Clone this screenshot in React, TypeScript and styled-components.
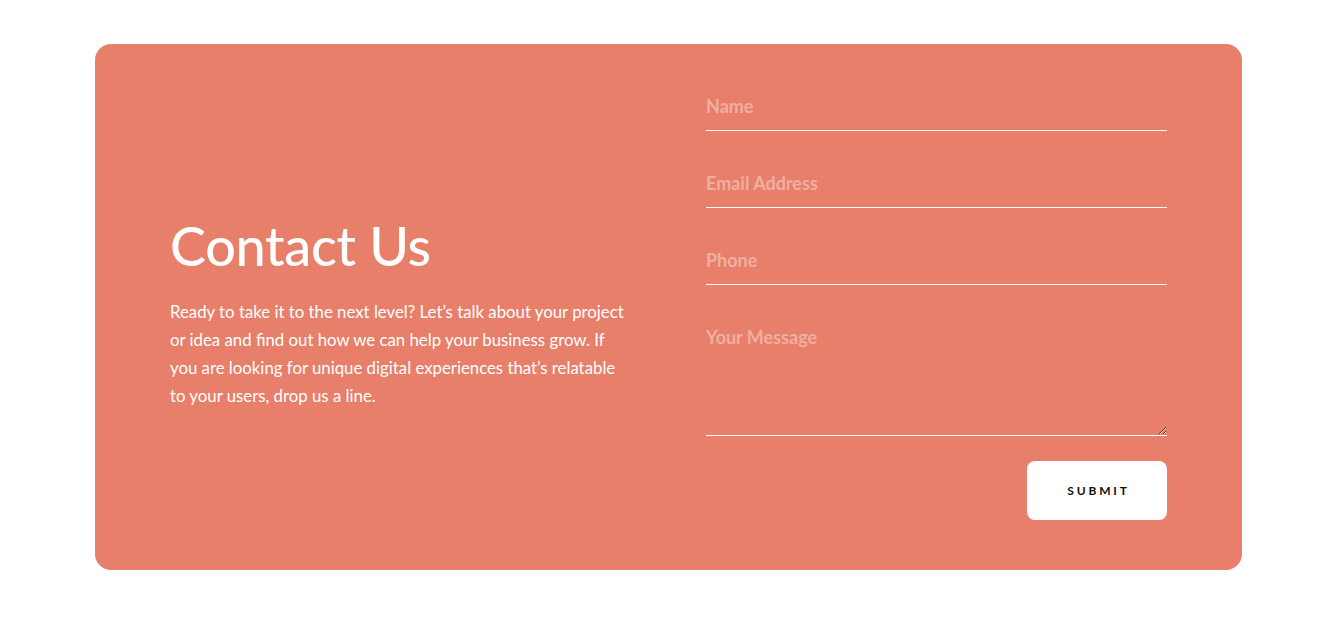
import React from "react";
import styled, { createGlobalStyle } from "styled-components";

const Global = createGlobalStyle`
  html, body { margin: 0; padding: 0; background: #ffffff; }
  body { font-family: Lato, "Open Sans", sans-serif; }
  * { box-sizing: border-box; }
`;

const Page = styled.div`
  padding: 44px 0 0 95px;
`;

const Card = styled.section`
  width: 1147px;
  height: 526px;
  background: #e87f6a;
  border-radius: 16px;
  padding: 40px 75px 50px;
  display: grid;
  grid-template-columns: 461px 461px;
  column-gap: 75px;
`;

const Intro = styled.div`
  display: flex;
  flex-direction: column;
  justify-content: center;
  padding-top: 22px;
`;

const Heading = styled.h2`
  margin: 0 0 22px;
  font-family: Lato, sans-serif;
  font-weight: 500;
  font-size: 54px;
  line-height: 1.1;
  color: #ffffff;
  letter-spacing: -0.3px;
`;

const Text = styled.p`
  margin: 0;
  font-family: Lato, sans-serif;
  font-size: 16.8px;
  line-height: 28px;
  color: #ffffff;
`;

const Form = styled.form`
  display: flex;
  flex-direction: column;
`;

const fieldText = `
  font-family: Lato, sans-serif;
  font-weight: 700;
  font-size: 18px;
  color: #ffffff;
  outline: none;
  background: transparent;
  border: none;
  border-bottom: 1px solid #ffffff;
  &::placeholder { color: rgba(255, 255, 255, 0.38); }
`;

const Input = styled.input`
  ${fieldText}
  height: 47px;
  margin-bottom: 30px;
  padding: 0 0 2px;
`;

const Area = styled.textarea`
  ${fieldText}
  height: 121px;
  padding: 11px 0 0;
`;

const Actions = styled.div`
  display: flex;
  justify-content: flex-end;
  margin-top: 25px;
`;

const Button = styled.button`
  width: 140px;
  height: 59px;
  border: none;
  border-radius: 8px;
  background: #ffffff;
  color: #111111;
  font-family: Lato, sans-serif;
  font-weight: 700;
  font-size: 12px;
  letter-spacing: 2.8px;
  padding: 0 0 0 3px;
  cursor: pointer;
`;

export default function App() {
  return (
    <>
      <Global />
      <Page>
        <Card>
          <Intro>
            <Heading>Contact Us</Heading>
            <Text>
              Ready to take it to the next level? Let’s talk about your project or idea and find out how we can help your business grow. If you are looking for unique digital experiences that’s relatable to your users, drop us a line.
            </Text>
          </Intro>
          <Form onSubmit={(e) => e.preventDefault()}>
            <Input placeholder="Name" />
            <Input placeholder="Email Address" />
            <Input placeholder="Phone" />
            <Area placeholder="Your Message" />
            <Actions>
              <Button type="submit">SUBMIT</Button>
            </Actions>
          </Form>
        </Card>
      </Page>
    </>
  );
}
